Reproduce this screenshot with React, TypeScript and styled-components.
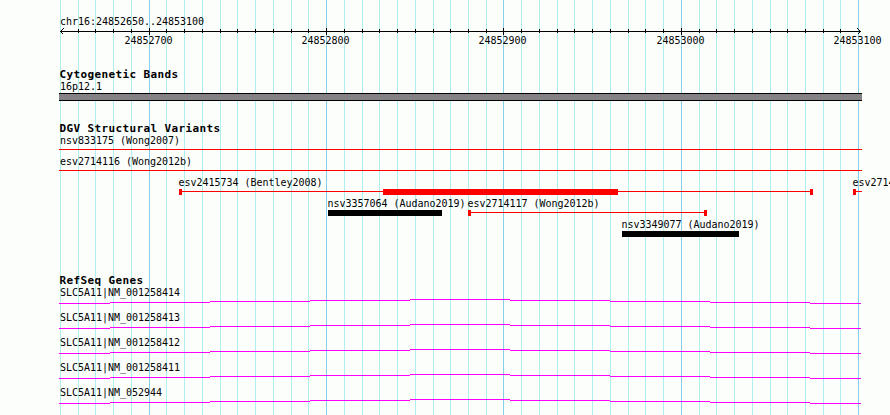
import React from 'react';
import styled, { createGlobalStyle } from 'styled-components';

const colors = {
    page: '#fcfefc',
    ink: '#000000',
    minorLine: '#afeeee',
    majorLine: '#87ceeb',
    band: '#848284',
    loss: '#ff0000',
    complex: '#000000',
    gene: '#ff00ff',
};

const WIDTH = 890;
const LEFT = 59;
const RIGHT = 862;
const FIRST_TICK = 60.5;
const TICK_STEP = 8000 / 451;

interface ITick {
    x: number;
    major: boolean;
    label: number;
}

const ticks: ITick[] = Array.from({ length: 46 }, (_, i) => ({
    x: Math.floor(FIRST_TICK + i * TICK_STEP),
    major: i % 10 === 5,
    label: 24852650 + i * 10,
}));

interface IBlock {
    from: number;
    to: number;
}

interface IVariant {
    name: string;
    start: number;
    end: number;
    color: string;
    line?: boolean;
    blocks: IBlock[];
}

const variantRows: IVariant[][] = [
    [{ name: 'nsv833175 (Wong2007)', start: LEFT, end: RIGHT, color: colors.loss, line: true, blocks: [] }],
    [{ name: 'esv2714116 (Wong2012b)', start: LEFT, end: RIGHT, color: colors.loss, line: true, blocks: [] }],
    [
        {
            name: 'esv2415734 (Bentley2008)',
            start: 179,
            end: 813,
            color: colors.loss,
            line: true,
            blocks: [{ from: 179, to: 182 }, { from: 383, to: 618 }, { from: 810, to: 813 }],
        },
        { name: 'esv2714', start: 853, end: RIGHT, color: colors.loss, line: true, blocks: [{ from: 853, to: 856 }] },
    ],
    [
        { name: 'nsv3357064 (Audano2019)', start: 328, end: 442, color: colors.complex, blocks: [{ from: 328, to: 442 }] },
        {
            name: 'esv2714117 (Wong2012b)',
            start: 468,
            end: 707,
            color: colors.loss,
            line: true,
            blocks: [{ from: 468, to: 471 }, { from: 704, to: 707 }],
        },
    ],
    [{ name: 'nsv3349077 (Audano2019)', start: 622, end: 739, color: colors.complex, blocks: [{ from: 622, to: 739 }] }],
];

const genes = ['NM_001258414', 'NM_001258413', 'NM_001258412', 'NM_001258411', 'NM_052944'];

// the intron line climbs one pixel every hundred and comes back down
const intronSteps = [
    { from: 59, to: 110, y: 4 },
    { from: 110, to: 210, y: 3 },
    { from: 210, to: 310, y: 2 },
    { from: 310, to: 410, y: 1 },
    { from: 410, to: 510, y: 0 },
    { from: 510, to: 610, y: 1 },
    { from: 610, to: 710, y: 2 },
    { from: 710, to: 810, y: 3 },
    { from: 810, to: 861, y: 4 },
];

const GlobalStyle = createGlobalStyle`
    body {
        margin: 0;
        background: ${colors.page};
        overflow: hidden;
    }
`;

const Browser = styled.main`
    position: relative;
    isolation: isolate;
    box-sizing: border-box;
    width: ${WIDTH}px;
    height: 415px;
    padding-top: 15px;
    overflow: hidden;
    background: ${colors.page};
    color: ${colors.ink};
    font: 10px/13px 'DejaVu Sans Mono', monospace;
    letter-spacing: -0.02px;
    white-space: pre;
`;

const GridLines = styled.svg`
    position: absolute;
    z-index: -1;
    top: 0;
    left: 0;
`;

const Drawing = styled.svg`
    display: block;
    shape-rendering: crispEdges;
`;

const Label = styled.div<{ $start?: number }>`
    height: 13px;
    margin-left: ${props => props.$start ?? 60}px;
`;

const Scale = styled.div`
    display: grid;
    height: 13px;
    margin-top: -1px;
`;

const ScaleLabel = styled.span<{ $center: number }>`
    grid-area: 1 / 1;
    width: 48px;
    margin-left: ${props => props.$center - 24.5}px;
`;

const Track = styled.section<{ $gap: number }>`
    display: flex;
    flex-direction: column;
    margin-top: ${props => props.$gap}px;
`;

const TrackTitle = styled.h2`
    height: 12px;
    margin: 0 0 0 59.5px;
    padding-top: 1px;
    font-size: 11px;
    line-height: 13px;
    font-weight: bold;
    letter-spacing: 0.378px;
`;

const Band = styled.div`
    box-sizing: border-box;
    width: ${RIGHT - LEFT}px;
    height: 8px;
    margin-left: ${LEFT}px;
    border: solid ${colors.ink};
    border-width: 1px 0;
    background: ${colors.band};
`;

const VariantRow = styled.div`
    display: grid;
    height: 21px;
`;

const VariantItem = styled.div`
    grid-area: 1 / 1;
`;

const GeneRow = styled.div`
    height: 25px;
`;

const Ruler = () => (
    <Drawing width={WIDTH} height={7}>
        <rect x={60} y={3} width={801} height={1} />
        {ticks.slice(1, -1).map(tick => (
            <rect key={tick.x} x={tick.x} y={tick.major ? 0 : 1} width={1} height={tick.major ? 7 : 4} />
        ))}
        <path d="M63.5 0.5L60.5 3.5L63.5 6.5M857.5 0.5L860.5 3.5L857.5 6.5" fill="none" stroke={colors.ink} />
    </Drawing>
);

const Variant = ({ name, start, end, color, line, blocks }: IVariant) => (
    <VariantItem>
        <Label $start={Math.max(start - 0.6, 60)}>{name}</Label>
        <Drawing width={WIDTH} height={6} fill={color}>
            {line && <rect x={start} y={2} width={end - start} height={1} />}
            {blocks.map(block => (
                <rect key={block.from} x={block.from} y={0} width={block.to - block.from} height={6} />
            ))}
        </Drawing>
    </VariantItem>
);

const App = () => (
    <Browser>
        <GlobalStyle />
        <GridLines width={WIDTH} height={415} shapeRendering="crispEdges">
            {ticks.map(tick => (
                <rect
                    key={tick.x}
                    x={tick.x}
                    y={0}
                    width={1}
                    height={415}
                    fill={tick.major ? colors.majorLine : colors.minorLine}
                />
            ))}
        </GridLines>

        <Label>chr16:24852650..24853100</Label>
        <Ruler />
        <Scale>
            {ticks.filter(tick => tick.major).map(tick => (
                <ScaleLabel key={tick.x} $center={tick.x}>{tick.label}</ScaleLabel>
            ))}
        </Scale>

        <Track $gap={20}>
            <TrackTitle>Cytogenetic Bands</TrackTitle>
            <Label>16p12.1</Label>
            <Band />
        </Track>

        <Track $gap={20}>
            <TrackTitle>DGV Structural Variants</TrackTitle>
            {variantRows.map(row => (
                <VariantRow key={row[0].name}>
                    {row.map(item => <Variant key={item.name} {...item} />)}
                </VariantRow>
            ))}
        </Track>

        <Track $gap={34}>
            <TrackTitle>RefSeq Genes</TrackTitle>
            {genes.map(gene => (
                <GeneRow key={gene}>
                    <Label>SLC5A11|{gene}</Label>
                    <Drawing width={WIDTH} height={5} fill={colors.gene}>
                        {intronSteps.map(step => (
                            <rect key={step.from} x={step.from} y={step.y} width={step.to - step.from} height={1} />
                        ))}
                    </Drawing>
                </GeneRow>
            ))}
        </Track>
    </Browser>
);

export default App;
